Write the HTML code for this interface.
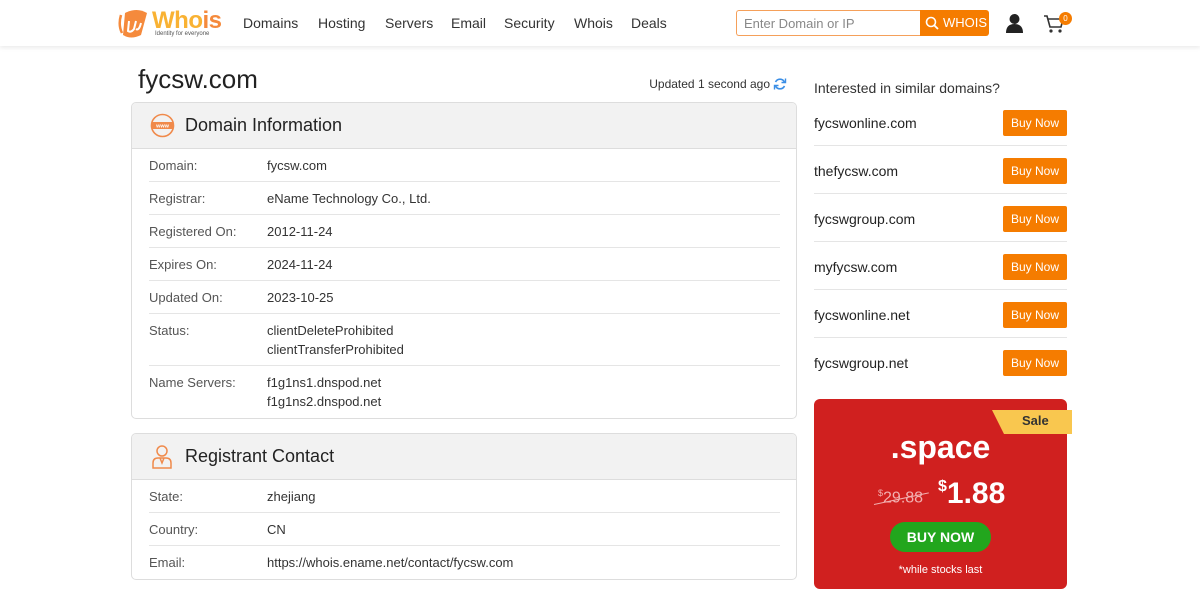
<!DOCTYPE html>
<html><head><meta charset="utf-8"><style>
*{margin:0;padding:0;box-sizing:border-box}
body{width:1200px;height:590px;overflow:hidden;background:#fff;font-family:"Liberation Sans",sans-serif;color:#222;position:relative}
.hdr{position:absolute;left:0;top:0;width:1200px;height:46px;background:#fff;box-shadow:0 2px 4px rgba(0,0,0,.08)}
.nav{position:absolute;top:15px;font-size:14px;color:#333}
.abs{position:absolute}
.card{position:absolute;left:131px;width:666px;border:1px solid #ddd;border-radius:5px;overflow:hidden}
.ch{height:46px;background:#f2f2f2;border-bottom:1px solid #ddd;position:relative}
.ch span{position:absolute;left:53px;top:12px;font-size:18px;color:#222}
.row{position:relative;margin:0 16px 0 17px;border-bottom:1px solid #e5e5e5;font-size:13px;color:#333;height:33px}
.row:last-child{border-bottom:none}
.row .l{position:absolute;left:0;top:7px;line-height:19px;color:#555}
.row .v{position:absolute;left:118px;top:7px;line-height:19px}
.sug{position:absolute;left:814px;width:253px;height:48px;border-bottom:1px solid #e5e5e5}
.sug span{position:absolute;left:0;top:17px;font-size:14px;color:#222}
.sug b{position:absolute;right:0;top:12px;width:64px;height:26px;background:#f57c00;color:#fff;font-weight:normal;font-size:12px;text-align:center;line-height:26px;border-radius:2px}
</style></head><body>
<div class="hdr">
 <svg class="abs" style="left:117px;top:9px" width="34" height="30" viewBox="0 0 34 30"><path d="M8 4 Q20 -2 30 4 L24 26 Q14 31 6 26 Z" fill="#f58a3c"/><path d="M4 6 Q1 16 5 24" stroke="#f58a3c" stroke-width="2.5" fill="none"/><path d="M12 12 L11 22 Q14 24 17 20 L19 12 M19 20 Q22 22 24 14" stroke="#fff" stroke-width="2" fill="none"/></svg>
 <div class="abs" style="left:152px;top:7px;font-size:24px;font-weight:bold;color:#f9b233;letter-spacing:-0.5px">Who<span style="color:#f58a3c">is</span></div>
 <div class="abs" style="left:155px;top:31px;font-size:6px;color:#555">Identity for everyone</div>
 <div class="nav" style="left:243px">Domains</div>
 <div class="nav" style="left:318px">Hosting</div>
 <div class="nav" style="left:385px">Servers</div>
 <div class="nav" style="left:451px">Email</div>
 <div class="nav" style="left:504px">Security</div>
 <div class="nav" style="left:574px">Whois</div>
 <div class="nav" style="left:631px">Deals</div>
 <div class="abs" style="left:736px;top:10px;width:184px;height:26px;border:1px solid #f5a05a;border-right:none;border-radius:3px 0 0 3px;font-size:13px;color:#888;padding:5px 7px">Enter Domain or IP</div>
 <div class="abs" style="left:920px;top:10px;width:69px;height:26px;background:#f57c00;border-radius:0 3px 3px 0;color:#fff;font-size:13px;line-height:26px;padding-left:23px">WHOIS
  <svg class="abs" style="left:5px;top:6px" width="14" height="14" viewBox="0 0 14 14"><circle cx="6" cy="6" r="4.5" stroke="#fff" stroke-width="1.6" fill="none"/><path d="M9.2 9.2 L13 13" stroke="#fff" stroke-width="1.8"/></svg></div>
 <svg class="abs" style="left:1005px;top:13px" width="19" height="20" viewBox="0 0 19 20"><circle cx="9.5" cy="6" r="5" fill="#222"/><path d="M1 20 Q1 11 9.5 11 Q18 11 18 20Z" fill="#222"/></svg>
 <svg class="abs" style="left:1043px;top:14px" width="22" height="20" viewBox="0 0 22 20"><path d="M1 2 H4 L7 13 H18 L20 5 H5" stroke="#333" stroke-width="1.6" fill="none"/><circle cx="8" cy="17" r="1.6" fill="#333"/><circle cx="17" cy="17" r="1.6" fill="#333"/></svg>
 <div class="abs" style="left:1059px;top:12px;width:13px;height:13px;border-radius:50%;background:#f57c00;color:#fff;font-size:8px;text-align:center;line-height:13px">0</div>
</div>

<div class="abs" style="left:138px;top:64px;font-size:26px;color:#222">fycsw.com</div>
<div class="abs" style="right:430px;top:77px;font-size:12px;color:#333">Updated 1 second ago</div>
<svg class="abs" style="left:773px;top:77px" width="14" height="14" viewBox="0 0 14 14"><path d="M11.5 5 A5 5 0 0 0 2.5 5 M2.5 9 A5 5 0 0 0 11.5 9" stroke="#3a8ee6" stroke-width="1.6" fill="none"/><path d="M12.5 1.5 V5.5 H8.5 M1.5 12.5 V8.5 H5.5" stroke="#3a8ee6" stroke-width="1.4" fill="none"/></svg>

<div class="card" style="top:102px;height:317px">
 <div class="ch"><svg class="abs" style="left:18px;top:10px" width="25" height="25" viewBox="0 0 25 25"><circle cx="12.5" cy="12.5" r="11" stroke="#f08a4b" stroke-width="1.6" fill="none"/><rect x="1.5" y="9" width="22" height="7" fill="#f08a4b"/><text x="12.5" y="14.5" font-size="5.5" fill="#fff" text-anchor="middle" font-family="Liberation Sans" font-weight="bold">www</text></svg><span>Domain Information</span></div>
 <div class="row"><span class="l">Domain:</span><span class="v">fycsw.com</span></div>
 <div class="row"><span class="l">Registrar:</span><span class="v">eName Technology Co., Ltd.</span></div>
 <div class="row"><span class="l">Registered On:</span><span class="v">2012-11-24</span></div>
 <div class="row"><span class="l">Expires On:</span><span class="v">2024-11-24</span></div>
 <div class="row"><span class="l">Updated On:</span><span class="v">2023-10-25</span></div>
 <div class="row" style="height:52px"><span class="l">Status:</span><span class="v">clientDeleteProhibited<br>clientTransferProhibited</span></div>
 <div class="row" style="height:52px"><span class="l">Name Servers:</span><span class="v">f1g1ns1.dnspod.net<br>f1g1ns2.dnspod.net</span></div>
</div>

<div class="card" style="top:433px;height:147px">
 <div class="ch"><svg class="abs" style="left:20px;top:10px" width="20" height="25" viewBox="0 0 20 25"><circle cx="10" cy="7" r="5" stroke="#f08a4b" stroke-width="1.5" fill="none"/><path d="M1 24 V19 Q1 14 6 14 H14 Q19 14 19 19 V24 Z M8 14 L10 19 L12 14" stroke="#f08a4b" stroke-width="1.5" fill="none"/></svg><span>Registrant Contact</span></div>
 <div class="row"><span class="l">State:</span><span class="v">zhejiang</span></div>
 <div class="row"><span class="l">Country:</span><span class="v">CN</span></div>
 <div class="row"><span class="l">Email:</span><span class="v">https://whois.ename.net/contact/fycsw.com</span></div>
</div>

<div class="abs" style="left:814px;top:80px;font-size:14px;color:#333">Interested in similar domains?</div>
<div class="sug" style="top:98px"><span>fycswonline.com</span><b>Buy Now</b></div>
<div class="sug" style="top:146px"><span>thefycsw.com</span><b>Buy Now</b></div>
<div class="sug" style="top:194px"><span>fycswgroup.com</span><b>Buy Now</b></div>
<div class="sug" style="top:242px"><span>myfycsw.com</span><b>Buy Now</b></div>
<div class="sug" style="top:290px"><span>fycswonline.net</span><b>Buy Now</b></div>
<div class="sug" style="top:338px;border:none"><span>fycswgroup.net</span><b>Buy Now</b></div>

<div class="abs" style="left:814px;top:399px;width:253px;height:190px;background:#d0201f;border-radius:6px;color:#fff;text-align:center">
 <svg class="abs" style="left:178px;top:11px" width="80" height="24" viewBox="0 0 80 24"><path d="M0 0 H80 V24 H12 L6 12 Z" fill="#f9c74f"/></svg>
 <div class="abs" style="left:208px;top:14px;font-size:13px;font-weight:bold;color:#333">Sale</div>
 <div class="abs" style="left:0;top:30px;width:253px;font-size:32px;font-weight:bold">.space</div>
 <div class="abs" style="left:64px;top:89px;font-size:16px;color:#f2b0b0"><sup style="font-size:9px">$</sup>29.88</div>
 <div class="abs" style="left:60px;width:56px;height:1px;background:#f2b0b0;transform:rotate(-12deg);transform-origin:left;top:105px"></div>
 <div class="abs" style="left:124px;top:78px;font-size:30px;font-weight:bold"><sup style="font-size:16px;vertical-align:12px">$</sup>1.88</div>
 <div class="abs" style="left:76px;top:123px;width:101px;height:30px;border-radius:15px;background:#22a61d;font-size:14px;font-weight:bold;line-height:30px">BUY NOW</div>
 <div class="abs" style="left:0;top:165px;width:253px;font-size:11px">*while stocks last</div>
</div>
</body></html>
